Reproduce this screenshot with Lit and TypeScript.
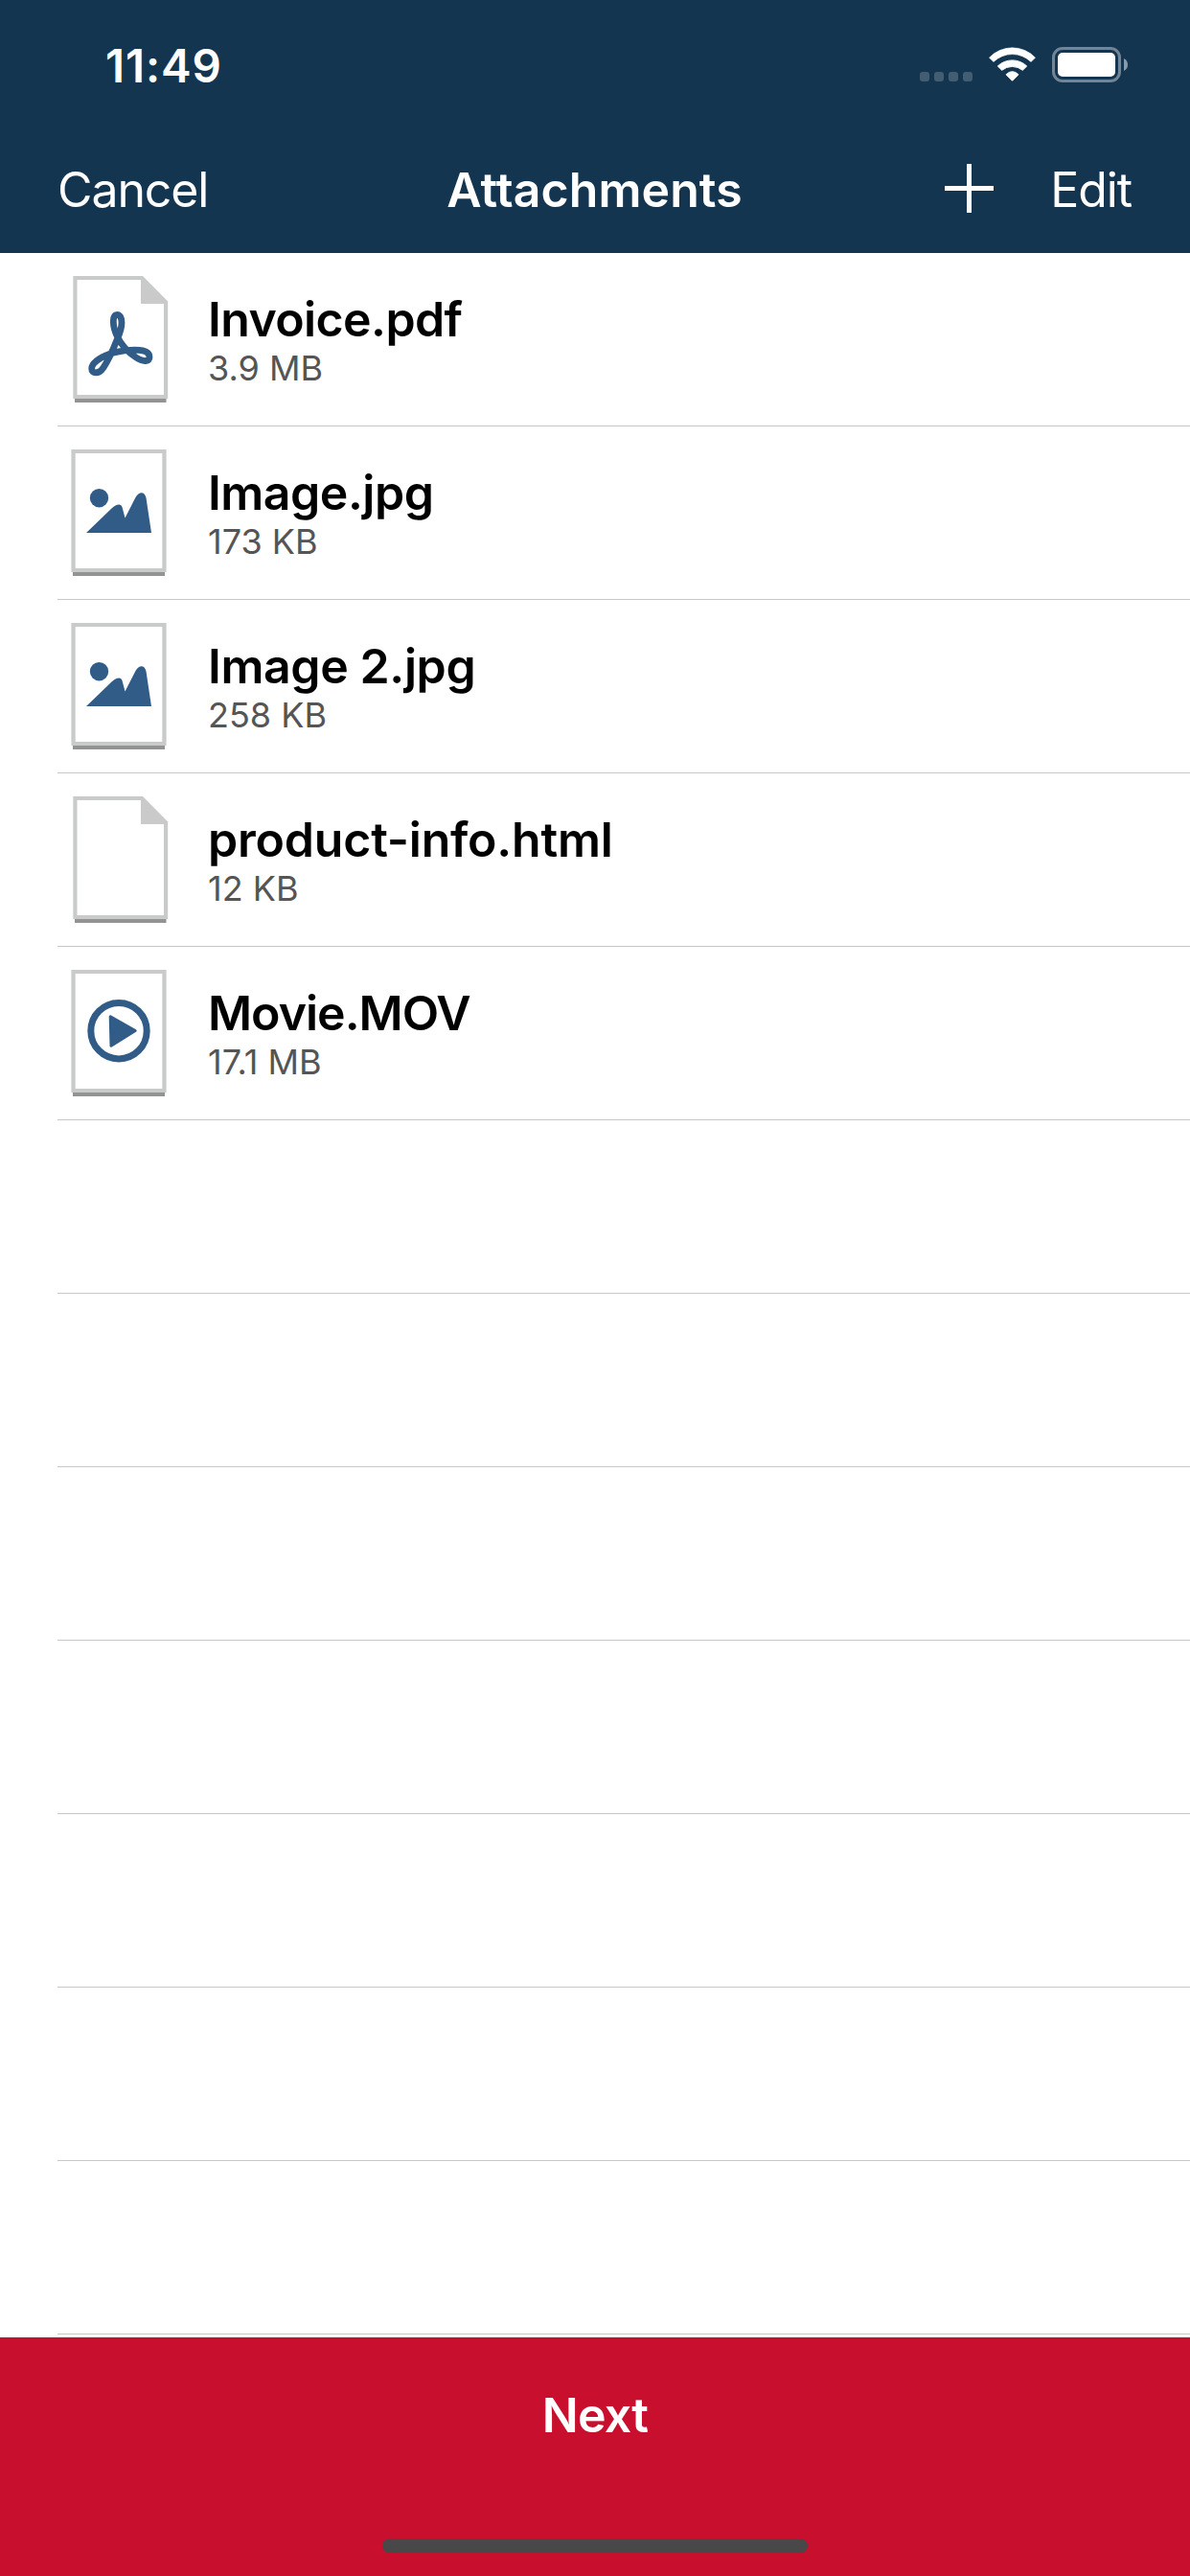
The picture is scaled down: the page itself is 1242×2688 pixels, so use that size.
import { LitElement, html, css, svg } from "lit";
import { customElement } from "lit/decorators.js";

type Kind = "pdf" | "image" | "blank" | "movie";

const FILES: { name: string; size: string; kind: Kind; tracking: number }[] = [
  { name: "Invoice.pdf", size: "3.9 MB", kind: "pdf", tracking: -0.6 },
  { name: "Image.jpg", size: "173 KB", kind: "image", tracking: -0.5 },
  { name: "Image 2.jpg", size: "258 KB", kind: "image", tracking: -0.4 },
  { name: "product-info.html", size: "12 KB", kind: "blank", tracking: -0.2 },
  { name: "Movie.MOV", size: "17.1 MB", kind: "movie", tracking: -1 },
];
const EMPTY_ROWS = 7;

const foldedPage = svg`
  <path d="M.3 0H73L99.200 26.500V128H.3Z" fill="#c9cbca"/>
  <path d="M4.500 4H71V29H95V124H4.500Z" fill="#fff"/>
  <rect x="2" y="128" width="95.500" height="4" fill="#939393"/>`;
const plainPage = svg`
  <rect x="-1.600" y="0" width="99.200" height="128" fill="#c9cbca"/>
  <rect x="2.700" y="4" width="90.600" height="120" fill="#fff"/>
  <rect x="0" y="128" width="96" height="4" fill="#939393"/>`;

const icons: Record<Kind, unknown> = {
  pdf: svg`${foldedPage}
    <path d="M46.300 40.300C41 40.300 41 52 46.300 63C50 71 57 79 66 85C74 90.500 80 89 80 84.500C80 77 68 76.800 60 77.300C50 78 45 79 38 81.500C27 85.500 19.700 91.500 19.700 96.500C19.700 102 27 103 32 95.500C38 86.500 42 77 46.300 66C50 58 51 52 51 48.500C51 43.500 49 40.300 46.300 40.300Z" fill="none" stroke="#325c88" stroke-width="6.800" stroke-linejoin="round"/>`,
  image: svg`${plainPage}
    <circle cx="27.500" cy="50.700" r="9.700" fill="#325c88"/>
    <path d="M14 87L40.500 61.500C46 56.500 51 55.500 52 62L54.500 71.500L65.500 50C69 43.500 75 43.500 76.500 50.500L82 87Z" fill="#325c88"/>`,
  blank: foldedPage,
  movie: svg`${plainPage}
    <circle cx="48" cy="63.700" r="29.200" fill="none" stroke="#325c88" stroke-width="7"/>
    <path d="M39.200 48.800L65.200 63.600L40 79.300Z" fill="#325c88" stroke="#325c88" stroke-width="3" stroke-linejoin="round"/>`,
};

@customElement("app-root")
export class AppRoot extends LitElement {
  static styles = css`
    :host { display: block; font-family: Inter, "Liberation Sans", sans-serif; }
    .screen { height: 2688px; display: flex; flex-direction: column; background: #fff; overflow: hidden; }
    .header { height: 264px; flex: none; background: #143550; color: #fff; display: flex; flex-direction: column; }
    .status { height: 132px; display: flex; justify-content: space-between; align-items: center; padding: 4px 64px 0 110px; box-sizing: border-box; }
    .time { font-size: 47.5px; font-weight: 600; letter-spacing: 0.9px; }
    .nav { height: 132px; display: grid; grid-template-columns: 1fr auto 1fr; align-items: center; padding: 0 61px 0 60px; }
    .nav-text { font-size: 50px; font-weight: 400; letter-spacing: -1.1px; }
    .title { font-size: 50px; font-weight: 600; letter-spacing: 0.1px; }
    .actions { display: flex; justify-content: flex-end; align-items: center; gap: 59px; }
    .plus { margin-bottom: 3px; }
    svg { display: block; overflow: visible; flex: none; }
    .list { flex: 1; min-height: 0; overflow: hidden; padding-left: 60px; }
    .row { height: 181px; box-sizing: border-box; border-bottom: 1px solid #c8c7c8; display: flex; padding: 24px 0 0 16px; gap: 41px; }
    .name { font-size: 50px; line-height: 60px; font-weight: 600; color: #000; margin-top: 15px; }
    .size { font-size: 36px; line-height: 44px; color: #555; margin-top: -1px; }
    .footer { height: 249px; flex: none; background: #c8102e; color: #fff; display: flex; flex-direction: column; align-items: center; justify-content: space-between; padding: 51px 0 24px; box-sizing: border-box; }
    .next { font-size: 50px; line-height: 60px; font-weight: 600; letter-spacing: -0.7px; }
    .home { width: 444px; height: 15px; border-radius: 8px; background: #484848; }
  `;

  render() {
    return html`
      <div class="screen">
        <header class="header">
          <div class="status">
            <span class="time">11:49</span>
            <svg width="218" height="38" viewBox="960 49 218 38">
              <g fill="#fff" opacity=".2">
                ${[960, 975, 990, 1005].map((x) => svg`<rect x=${x} y="75" width="10" height="10" rx="3"/>`)}
              </g>
              <g fill="#fff" stroke="#fff" stroke-width="1" stroke-linejoin="round">
                <path d="M1032.500 60.200A33 33 0 0 1 1080.500 60.200L1076 64.500A28 28 0 0 0 1037 64.500Z" stroke-width=".6"/>
                <path d="M1041.300 69A22 22 0 0 1 1071.700 69L1067.300 73.300A17 17 0 0 0 1045.700 73.300Z"/>
                <path d="M1050 77.800Q1056.500 71.500 1063 77.800L1056.500 84.300Z"/>
              </g>
              <rect x="1099.500" y="50.500" width="69" height="34" rx="9.500" fill="none" stroke="#fff" stroke-opacity=".4" stroke-width="3"/>
              <rect x="1104" y="55" width="60" height="25" rx="5" fill="#fff"/>
              <path d="M1173 61Q1177 63 1177 67.500T1173 74Z" fill="#fff" opacity=".5"/>
            </svg>
          </div>
          <nav class="nav">
            <span class="nav-text">Cancel</span>
            <span class="title">Attachments</span>
            <div class="actions">
              <svg class="plus" width="51" height="51"><path d="M0 25.500H51M25.500 0V51" stroke="#fff" stroke-width="5"/></svg>
              <span class="nav-text">Edit</span>
            </div>
          </nav>
        </header>
        <main class="list">
          ${FILES.map((f) => html`
            <div class="row">
              <svg width="100" height="132" viewBox="0 0 100 132">${icons[f.kind]}</svg>
              <div>
                <div class="name" style="letter-spacing:${f.tracking}px">${f.name}</div>
                <div class="size">${f.size}</div>
              </div>
            </div>`)}
          ${Array.from({ length: EMPTY_ROWS }, () => html`<div class="row"></div>`)}
        </main>
        <footer class="footer">
          <span class="next">Next</span>
          <div class="home"></div>
        </footer>
      </div>`;
  }
}
